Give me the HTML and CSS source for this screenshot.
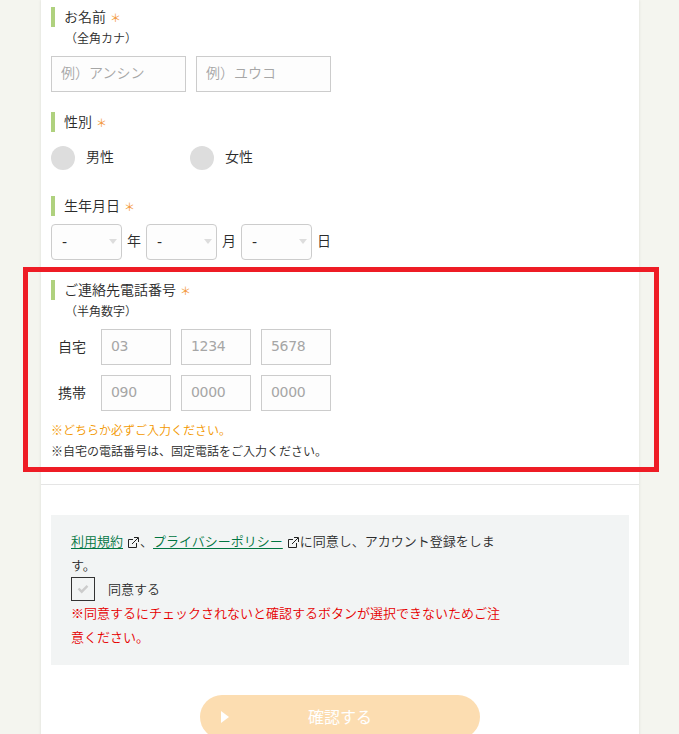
FILE: index.html
```html
<!DOCTYPE html>
<html lang="ja">
<head>
<meta charset="utf-8">
<title>アカウント登録</title>
<link rel="stylesheet" href="styles.css">
</head>
<body>
<svg class="defs" aria-hidden="true">
  <symbol id="ext" viewBox="0 0 11 11"><path d="M5 2.500H.5v8h8V6M6 .5h4.500v4.500M4 7l6-6" fill="none" stroke="#222"/></symbol>
</svg>
<main class="page">
  <form class="form">
    <section class="group name">
      <h2 class="title">お名前<span class="req">＊</span></h2>
      <p class="sub">（全角カナ）</p>
      <div class="fields">
        <input class="text wide" placeholder="例）アンシン">
        <input class="text wide" placeholder="例）ユウコ">
      </div>
    </section>
    <section class="group gender">
      <h2 class="title">性別<span class="req">＊</span></h2>
      <div class="radios">
        <label class="radio"><i class="dot"></i>男性</label>
        <label class="radio"><i class="dot"></i>女性</label>
      </div>
    </section>
    <section class="group birth">
      <h2 class="title">生年月日<span class="req">＊</span></h2>
      <div class="dates">
        <span class="select">-</span><span class="unit">年</span>
        <span class="select">-</span><span class="unit">月</span>
        <span class="select">-</span><span class="unit">日</span>
      </div>
    </section>
    <section class="group phone">
      <h2 class="title">ご連絡先電話番号<span class="req">＊</span></h2>
      <p class="sub">（半角数字）</p>
      <div class="fields tel">
        <span class="kind">自宅</span>
        <input class="text num" placeholder="03">
        <input class="text num" placeholder="1234">
        <input class="text num" placeholder="5678">
      </div>
      <div class="fields tel">
        <span class="kind">携帯</span>
        <input class="text num" placeholder="090">
        <input class="text num" placeholder="0000">
        <input class="text num" placeholder="0000">
      </div>
      <p class="note warn">※どちらか必ずご入力ください。</p>
      <p class="note">※自宅の電話番号は、固定電話をご入力ください。</p>
      <div class="highlight"></div>
    </section>
  </form>
  <section class="terms">
    <p><a class="link">利用規約</a><svg class="ext"><use href="#ext"/></svg>、<a class="link">プライバシーポリシー</a><svg class="ext"><use href="#ext"/></svg>に同意し、アカウント登録をしま<br>す。</p>
    <label class="agree"><span class="box"><svg width="12" height="10" viewBox="0 0 12 10"><path d="M1.500 4.500l3.200 3.200L10.500 1.800" fill="none" stroke="#ccc" stroke-width="2.400"/></svg></span>同意する</label>
    <p class="error">※同意するにチェックされないと確認するボタンが選択できないためご注<br>意ください。</p>
  </section>
  <button class="submit" type="button">確認する</button>
</main>
</body>
</html>
```
FILE: styles.css
```css
* { box-sizing: border-box; }
html { overflow: hidden; }
body {
  margin: 0;
  height: 734px;
  overflow: hidden;
  background: #f4f5ef;
  color: #2b2b2b;
  font: 350 14px/18px "Noto Sans CJK JP", sans-serif;
}
h2, p { margin: 0; font-weight: 350; }
.defs { display: none; }
.page {
  width: 598px;
  height: 760px;
  margin-left: 41px;
  background: #fff;
  box-shadow: 0 0 3px rgba(0, 0, 0, .1);
}
.form {
  height: 485px;
  padding: 7px 10px 0;
  border-bottom: 1px solid #e5e5e5;
}
.title {
  height: 20px;
  padding-left: 9px;
  border-left: 4px solid #afd17e;
  font-size: 14px;
}
.req { margin-left: 4px; color: #f3983a; font-size: 11px; font-weight: 400; }
.sub { height: 22px; padding-left: 14px; font-size: 12px; line-height: 22px; }
.name { height: 105px; }
.gender { height: 84px; }
.birth { height: 84px; }
.phone { position: relative; }
.fields { display: flex; gap: 10px; margin-top: 7px; }
.text {
  height: 36px;
  padding: 0 9px 4px;
  border: 1px solid #ccc;
  border-radius: 0;
  background: #fdfdfd;
  font: 350 14px "Noto Sans CJK JP", sans-serif;
}
.text::placeholder { color: #a6a6a6; opacity: 1; }
.wide { width: 135px; }
.num {
  width: 70px;
  padding-bottom: 2px;
  font: 400 14px "DejaVu Sans", sans-serif;
  letter-spacing: -.3px;
}
.tel + .tel { margin-top: 10px; }
.kind { width: 40px; padding-left: 7px; line-height: 34px; }
.radios { display: flex; margin-top: 14px; }
.radio { display: flex; width: 139px; line-height: 20px; }
.dot { width: 24px; height: 24px; margin-right: 11px; border-radius: 50%; background: #ddd; }
.dates { display: flex; margin-top: 8px; }
.select {
  display: flex;
  align-items: center;
  justify-content: space-between;
  width: 71px;
  height: 36px;
  padding: 0 4px 0 10px;
  border: 1px solid #ccc;
  border-radius: 4px;
  background: #fdfdfd;
  font-family: "DejaVu Sans", sans-serif;
  font-weight: 400;
}
.select::after {
  content: "";
  margin-top: -1px;
  border: solid transparent;
  border-width: 5px 4px 0;
  border-top-color: #ddd;
}
.unit { width: 24px; padding-left: 5px; line-height: 32px; }
.note { font-size: 12px; line-height: 21px; }
.tel + .note { margin-top: 8px; }
.warn { color: #f39800; }
.highlight {
  position: absolute;
  top: -13px;
  left: -28px;
  width: 636px;
  height: 205px;
  border: 5px solid #ee1c25;
}
.terms {
  height: 150px;
  margin: 30px 10px 0;
  padding: 14px 20px;
  background: #f2f4f4;
  font-size: 13px;
  line-height: 24px;
  white-space: nowrap;
}
.link { color: #007541; text-decoration: underline; text-underline-offset: 2px; }
.ext { width: 11px; height: 11px; margin: 0 1px 0 5px; vertical-align: -2px; }
.agree { display: flex; height: 24px; }
.box {
  display: grid;
  place-items: center;
  width: 24px;
  height: 24px;
  margin-right: 13px;
  border: 1px solid #333;
}
.error { color: #e60000; }
.submit {
  display: block;
  position: relative;
  width: 280px;
  height: 44px;
  margin: 30px 0 0 159px;
  padding: 0 0 3px;
  border: 0;
  border-radius: 22px;
  background: #fcddb1;
  color: #fff;
  font: 400 16px "Noto Sans CJK JP", sans-serif;
}
.submit::before {
  content: "";
  position: absolute;
  top: 16px;
  left: 21px;
  border: solid transparent;
  border-width: 6px 0 6px 8px;
  border-left-color: #fff;
}
```
